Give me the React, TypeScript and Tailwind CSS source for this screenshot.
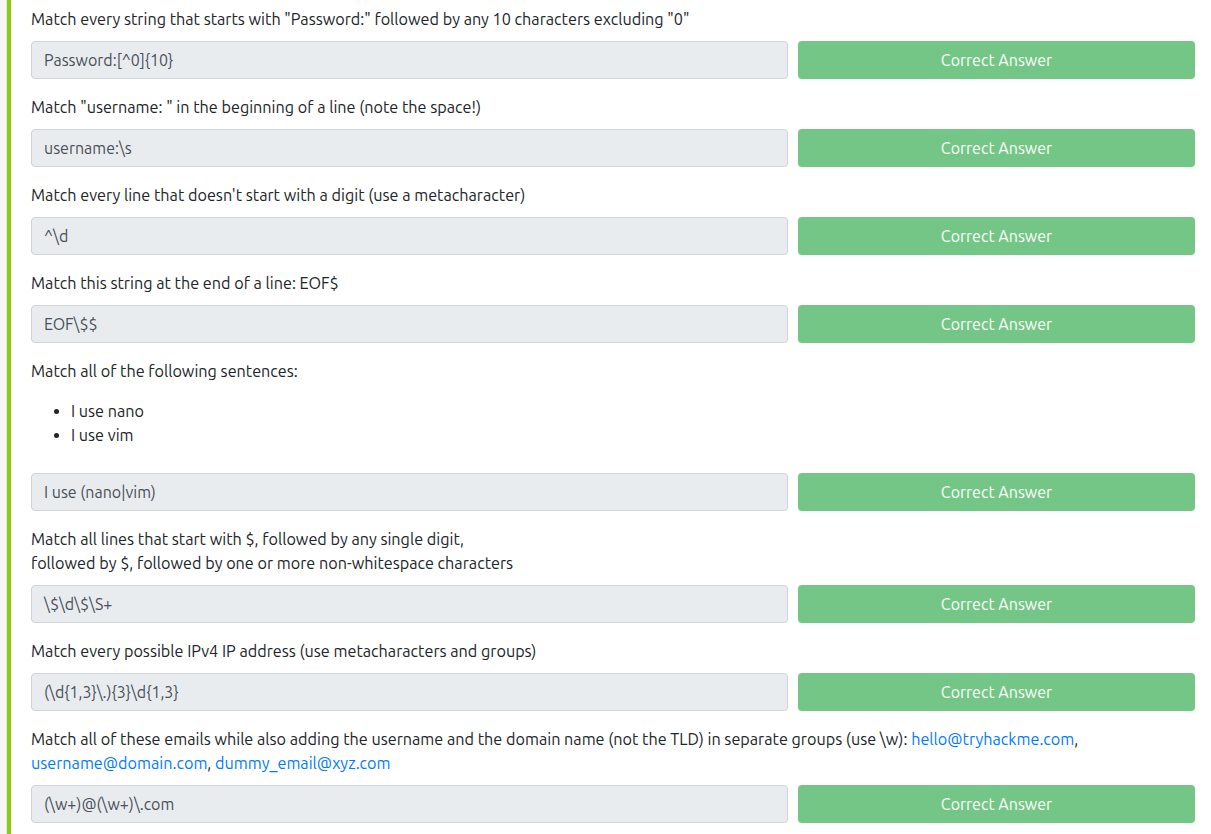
const font = { fontFamily: '"Ubuntu", "Open Sans", sans-serif' };

type Q = { question: React.ReactNode; answer: string; extra?: React.ReactNode };

const Row = ({ question, answer, extra }: Q) => (
  <div className="mb-[16px]">
    <div className="text-[16.2px] leading-[24px] text-[#212529]">{question}</div>
    {extra}
    <div className="mt-[10px] flex gap-[10px]">
      <div className="h-[38px] flex-1 rounded-[4px] border border-[#ced4da] bg-[#e9ecef] px-[12px] leading-[36px] text-[#495057]">
        {answer}
      </div>
      <button className="h-[38px] w-[397px] rounded-[4px] bg-[#73c686] text-white">Correct Answer</button>
    </div>
  </div>
);

const Link = ({ children }: { children: React.ReactNode }) => (
  <a className="text-[#007bff]">{children}</a>
);

const App = () => {
  return (
    <div className="flex min-h-[834px] bg-white text-[16px]" style={font}>
      <div className="w-[7px] shrink-0 border-r border-[#e6e6e6] bg-[#f7f7f7]" />
      <div className="w-[4px] shrink-0 bg-[#88cc14]" />
      <div className="flex-1 pl-[20px] pr-[16px] pt-[7px]">
        <Row
          question={'Match every string that starts with "Password:" followed by any 10 characters excluding "0"'}
          answer="Password:[^0]{10}"
        />
        <Row question={'Match "username: " in the beginning of a line (note the space!)'} answer="username:\s" />
        <Row question="Match every line that doesn't start with a digit (use a metacharacter)" answer="^\d" />
        <Row question="Match this string at the end of a line: EOF$" answer="EOF\$$" />
        <Row
          question="Match all of the following sentences:"
          extra={
            <ul className="mb-[26px] mt-[16px] list-disc pl-[40px] text-[16.2px] leading-[24px] text-[#212529]">
              <li>I use nano</li>
              <li>I use vim</li>
            </ul>
          }
          answer="I use (nano|vim)"
        />
        <Row
          question={
            <>
              Match all lines that start with $, followed by any single digit,
              <br />
              followed by $, followed by one or more non-whitespace characters
            </>
          }
          answer="\$\d\$\S+"
        />
        <Row
          question="Match every possible IPv4 IP address (use metacharacters and groups)"
          answer="(\d{1,3}\.){3}\d{1,3}"
        />
        <Row
          question={
            <>
              Match all of these emails while also adding the username and the domain name (not the TLD) in separate
              groups (use \w): <Link>hello@tryhackme.com</Link>,
              <br />
              <Link>username@domain.com</Link>, <Link>dummy_email@xyz.com</Link>
            </>
          }
          answer="(\w+)@(\w+)\.com"
        />
      </div>
    </div>
  );
};

export default App;
